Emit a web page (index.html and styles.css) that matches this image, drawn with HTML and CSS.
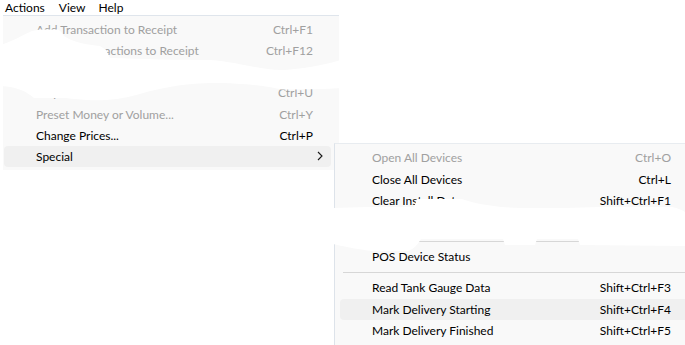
FILE: index.html
```html
<!DOCTYPE html>
<html>
<head>
<meta charset="utf-8">
<link rel="stylesheet" href="styles.css">
</head>
<body>
<div class="menubar">
  <span class="mb-item mb-actions">Actions</span>
  <span class="mb-item mb-view">View</span>
  <span class="mb-item mb-help">Help</span>
</div>

<div class="menu menu-main">
  <div class="row disabled"><span class="label">Add Transaction to Receipt</span><span class="key">Ctrl+F1</span></div>
  <div class="row disabled"><span class="label">Add All Transactions to Receipt</span><span class="key">Ctrl+F12</span></div>
  <div class="row disabled"><span class="label">Remove Transaction</span><span class="key"></span></div>
  <div class="row disabled"><span class="label">Stop Pump</span><span class="key">Ctrl+U</span></div>
  <div class="row disabled"><span class="label">Preset Money or Volume...</span><span class="key">Ctrl+Y</span></div>
  <div class="row"><span class="label">Change Prices...</span><span class="key">Ctrl+P</span></div>
  <div class="row hover"><span class="label">Special</span><span class="key arrow"><svg width="6" height="10" viewBox="0 0 6 10"><path d="M1 1 L5 5 L1 9" fill="none" stroke="#1a1a1a" stroke-width="1.1"/></svg></span></div>
</div>

<div class="menu menu-sub">
  <div class="row disabled"><span class="label">Open All Devices</span><span class="key">Ctrl+O</span></div>
  <div class="row"><span class="label">Close All Devices</span><span class="key">Ctrl+L</span></div>
  <div class="row"><span class="label">Clear Install Data</span><span class="key">Shift+Ctrl+F1</span></div>
  <div class="row tall"><span class="label">Reset Device</span><span class="key">Shift+Ctrl+F2</span></div>
  <div class="sep"></div>
  <div class="row"><span class="label">POS Device Status</span><span class="key"></span></div>
  <div class="sep"></div>
  <div class="row"><span class="label">Read Tank Gauge Data</span><span class="key">Shift+Ctrl+F3</span></div>
  <div class="row hover"><span class="label">Mark Delivery Starting</span><span class="key">Shift+Ctrl+F4</span></div>
  <div class="row"><span class="label">Mark Delivery Finished</span><span class="key">Shift+Ctrl+F5</span></div>
</div>

<svg class="redact" width="685" height="345" viewBox="0 0 685 345">
  <path d="M0 45 C12 42 22 35 32 31 L40 29.5 L58 29.5 C61 31 62 33 64 36 C72 42 88 45 100 46 L106 50 L110 58 C140 59 180 60 210 60 C240 62 262 71 285 70 C312 68 330 63 345 59 L345 88 C325 89 300 89.5 282 89.5 C270 87 250 83 210 83 C180 84 160 88 140 94 C120 100 100 101 88 100 C75 99 66 98 60 98 L34 98 C28 93 20 87 0 86 Z" fill="#fff"/>
  <path d="M333 208 L368 207 L414 207 L417 199 L462 199 C472 203 490 207 520 208 L565 208 L600 207 L672 207 C678 208 682 210 685 212 L685 246 L580 245 L578 239 L537 239 L535 245 L505 245 L503 239 L421 239 C418 244 414 249 408 251 L372 251 C355 249 342 246 333 244 Z" fill="#fff"/>
</svg>
</body>
</html>
```

FILE: styles.css
```css
html, body {
  margin: 0;
  padding: 0;
  background: #ffffff;
  width: 685px;
  height: 345px;
  overflow: hidden;
  font-family: Lato, "Noto Sans", sans-serif;
  font-size: 12px;
  color: #000;
}

.menubar {
  display: flex;
  height: 15px;
  align-items: center;
  padding-left: 5px;
  line-height: 15px;
}

.mb-item {
  display: inline-block;
}

.mb-actions { margin-right: 14px; }
.mb-view { margin-right: 13px; }

.menu {
  position: absolute;
  background: #f9f9f9;
  box-sizing: border-box;
}

.menu-main {
  left: 3px;
  top: 15px;
  width: 336px;
  padding: 3px 8px 3px 1px;
  border-top: 1px solid #dfe5ec;
}

.menu-sub {
  left: 334px;
  top: 143px;
  width: 370px;
  padding: 3px 0 3px 5px;
  border-left: 1px solid #dde3ea;
  border-top: 1px solid #e8ecf0;
}

.row {
  display: flex;
  align-items: center;
  justify-content: space-between;
  height: 21.15px;
  padding: 0 18px 0 32px;
  border-radius: 4px;
  white-space: nowrap;
}

.menu-sub .row {
  height: 21.5px;
  width: 349px;
  box-sizing: border-box;
}

.menu-sub .row.tall {
  height: 25px;
}

.row.disabled {
  color: #a0a0a0;
}

.row.hover {
  background: #f0f0f0;
}

.key {
  text-align: right;
}

.arrow {
  display: flex;
  align-items: center;
  margin-right: -10px;
}

.sep {
  height: 9.5px;
  display: flex;
  align-items: center;
}

.sep::before {
  content: "";
  display: block;
  width: 100%;
  height: 1px;
  background: #d7d7d7;
  margin-left: 3px;
}

.redact {
  position: absolute;
  left: 0;
  top: 0;
  pointer-events: none;
}
```
